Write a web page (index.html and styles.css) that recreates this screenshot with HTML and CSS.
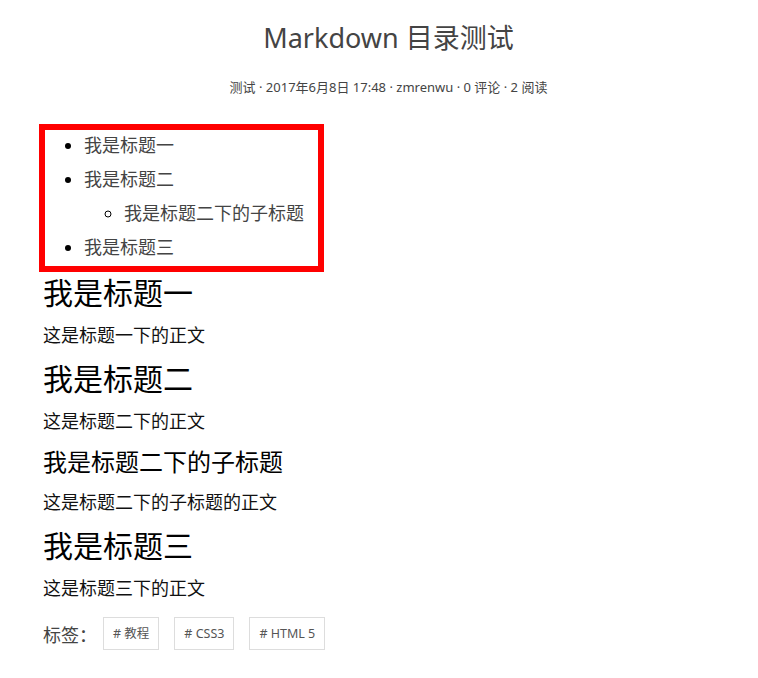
FILE: index.html
```html
<!DOCTYPE html>
<html lang="zh-CN">
<head>
<meta charset="utf-8">
<title>Markdown 目录测试</title>
<link rel="stylesheet" href="styles.css">
</head>
<body>
<div class="page">
  <header class="post-header">
    <h1 class="post-title">Markdown 目录测试</h1>
    <div class="post-meta">测试 · 2017年6月8日 17:48 · zmrenwu · 0 评论 · 2 阅读</div>
  </header>
  <article class="post-body">
    <div class="toc">
      <ul>
        <li>我是标题一</li>
        <li>我是标题二
          <ul>
            <li>我是标题二下的子标题</li>
          </ul>
        </li>
        <li>我是标题三</li>
      </ul>
    </div>
    <h1 class="h-big">我是标题一</h1>
    <p class="text">这是标题一下的正文</p>
    <h1 class="h-big">我是标题二</h1>
    <p class="text">这是标题二下的正文</p>
    <h2 class="h-mid">我是标题二下的子标题</h2>
    <p class="text">这是标题二下的子标题的正文</p>
    <h1 class="h-big">我是标题三</h1>
    <p class="text">这是标题三下的正文</p>
    <div class="tags">
      <span class="tags-label">标签：</span>
      <span class="tag"># 教程</span>
      <span class="tag"># CSS3</span>
      <span class="tag"># HTML 5</span>
    </div>
  </article>
</div>
</body>
</html>
```

FILE: styles.css
```css
html, body {
  margin: 0;
  padding: 0;
  background: #fff;
}
body {
  font-family: "Noto Sans", "Noto Sans CJK SC", sans-serif;
  color: #222;
}
.page {
  padding: 18px 24px 20px 43px;
}
.post-header {
  text-align: center;
}
.post-title {
  margin: 0;
  font-size: 27px;
  line-height: 40px;
  font-weight: 400;
  color: #444;
}
.post-meta {
  margin-top: 19px;
  font-size: 13px;
  line-height: 20px;
  color: #444;
}
.post-body {
  margin-top: 27px;
}
.toc {
  width: 273px;
  margin-left: -4px;
  border: 6px solid #ff0000;
  margin-bottom: 3px;
}
.toc ul {
  margin: 0;
  padding-left: 39px;
  list-style: disc;
}
.toc > ul {
  margin: -2px 0 2px;
}
.toc ul ul {
  padding-left: 40px;
  list-style: circle;
}
.toc li {
  font-size: 18px;
  line-height: 34px;
  color: #444;
}
.toc li::marker {
  color: #000;
}
.h-big {
  margin: 0 0 11px;
  font-size: 30px;
  line-height: 36px;
  font-weight: 400;
  color: #000;
}
.h-mid {
  margin: 0 0 12px;
  font-size: 24px;
  line-height: 30px;
  font-weight: 400;
  color: #000;
}
.text {
  margin: 0 0 13px;
  font-size: 18px;
  line-height: 26px;
  color: #111;
}
.tags {
  display: flex;
  align-items: center;
  margin-top: 16px;
}
.tags-label {
  font-size: 18px;
  color: #444;
  margin-right: 6px;
}
.tag {
  display: inline-block;
  border: 1px solid #ddd;
  padding: 0 9px;
  height: 31px;
  line-height: 31px;
  font-size: 12.5px;
  color: #555;
  margin-right: 15px;
}
```
